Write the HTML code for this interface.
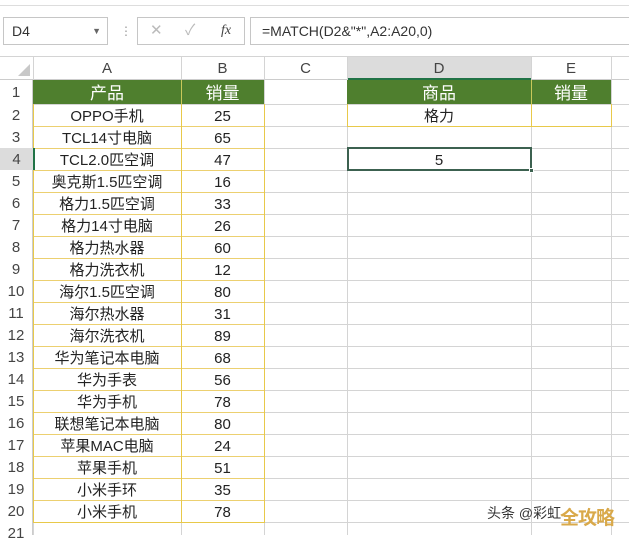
<!DOCTYPE html><html><head><meta charset="utf-8"><style>
body{margin:0;width:629px;height:535px;overflow:hidden;background:#fff;font-family:"Liberation Sans","Noto Sans CJK SC",sans-serif;position:relative}
.a{position:absolute;box-sizing:border-box}
.vl{position:absolute;top:57px;bottom:0;width:1px;background:#d4d4d4}
.hl{position:absolute;left:0;right:0;height:1px;background:#d4d4d4}
.rn{position:absolute;left:0;width:32px;text-align:center;font-size:15px;color:#444;height:22px;line-height:24px}
.c{position:absolute;text-align:center;font-size:15px;color:#222;height:22px;line-height:25px}
.ch{position:absolute;top:57px;height:23px;line-height:23px;text-align:center;font-size:15px;color:#444}
</style></head><body>
<div class="a" style="left:0;top:0;width:629px;height:6px;background:#fff;border-bottom:1px solid #ddd"></div>
<div class="a" style="left:3px;top:17px;width:105px;height:28px;border:1px solid #c6c6c6;font-size:14px;line-height:26px;padding-left:8px;color:#333">D4<span style="position:absolute;right:6px;font-size:9px;color:#666">▼</span></div>
<div class="a" style="left:120px;top:24px;color:#999;font-size:12px">⋮</div>
<div class="a" style="left:137px;top:17px;width:108px;height:28px;border:1px solid #c6c6c6;color:#bbb;font-size:15px;line-height:26px"><span style="position:absolute;left:12px">✕</span><span style="position:absolute;left:47px">✓</span><span style="position:absolute;left:83px;color:#444;font-style:italic;font-family:'Liberation Serif',serif;font-size:14px">fx</span></div>
<div class="a" style="left:250px;top:17px;width:385px;height:28px;border:1px solid #c6c6c6;font-size:14px;line-height:26px;padding-left:11px;color:#333">=MATCH(D2&amp;"*",A2:A20,0)</div>
<div class="a" style="left:0;top:56px;width:629px;height:1px;background:#d4d4d4"></div>
<div class="a" style="left:0;top:57px;width:629px;height:23px;background:#fff;border-bottom:1px solid #ccc"></div>
<div class="a" style="left:347px;top:57px;width:184px;height:23px;background:#dcdcdc;border-bottom:2px solid #217346"></div>
<div class="a" style="left:18px;top:64px;width:0;height:0;border-left:12px solid transparent;border-bottom:12px solid #c8c8c8"></div>
<div class="ch" style="left:33px;width:148px">A</div><div class="ch" style="left:181px;width:83px">B</div><div class="ch" style="left:264px;width:83px">C</div><div class="ch" style="left:347px;width:184px">D</div><div class="ch" style="left:531px;width:80px">E</div>
<div class="vl" style="left:33px"></div><div class="vl" style="left:181px"></div><div class="vl" style="left:264px"></div><div class="vl" style="left:347px"></div><div class="vl" style="left:531px"></div><div class="vl" style="left:611px"></div>
<div class="hl" style="top:104px"></div><div class="hl" style="top:126px"></div><div class="hl" style="top:148px"></div><div class="hl" style="top:170px"></div><div class="hl" style="top:192px"></div><div class="hl" style="top:214px"></div><div class="hl" style="top:236px"></div><div class="hl" style="top:258px"></div><div class="hl" style="top:280px"></div><div class="hl" style="top:302px"></div><div class="hl" style="top:324px"></div><div class="hl" style="top:346px"></div><div class="hl" style="top:368px"></div><div class="hl" style="top:390px"></div><div class="hl" style="top:412px"></div><div class="hl" style="top:434px"></div><div class="hl" style="top:456px"></div><div class="hl" style="top:478px"></div><div class="hl" style="top:500px"></div><div class="hl" style="top:522px"></div>
<div class="a" style="left:0;top:80px;width:33px;height:455px;background:#fff;border-right:1px solid #ccc"></div>
<div class="a" style="left:33px;top:80px;width:231px;height:24px;background:#4f7f2e"></div>
<div class="a" style="left:347px;top:80px;width:264px;height:24px;background:#4f7f2e"></div>
<div class="c" style="left:33px;top:81px;width:148px;color:#fff;font-size:17px">产品</div>
<div class="c" style="left:181px;top:81px;width:83px;color:#fff;font-size:17px">销量</div>
<div class="c" style="left:347px;top:81px;width:184px;color:#fff;font-size:17px">商品</div>
<div class="c" style="left:531px;top:81px;width:80px;color:#fff;font-size:17px">销量</div>
<div class="a" style="left:181px;top:80px;width:1px;height:24px;background:#c9c85a"></div>
<div class="a" style="left:531px;top:80px;width:1px;height:24px;background:#c9c85a"></div>
<div class="a" style="left:33px;top:104px;width:232px;height:419px;border:1px solid #e8c94a;border-top:0;background:repeating-linear-gradient(to bottom,transparent 0,transparent 22px,#ecd070 22px,#ecd070 23px);background-size:100% 22px;background-position:0 0"></div>
<div class="a" style="left:34px;top:126px;width:230px;height:396px;background:repeating-linear-gradient(to bottom,#ecd070 0,#ecd070 1px,transparent 1px,transparent 22px)"></div>
<div class="a" style="left:181px;top:104px;width:1px;height:419px;background:#e8c94a"></div>
<div class="a" style="left:347px;top:104px;width:265px;height:23px;border:1px solid #e8c94a;border-top:0"></div>
<div class="a" style="left:531px;top:104px;width:1px;height:22px;background:#e8c94a"></div>
<div class="c" style="left:347px;top:104px;width:184px">格力</div>
<div class="a" style="left:347px;top:147px;width:185px;height:24px;border:2px solid #3c6150"></div>
<div class="a" style="left:529px;top:168px;width:5px;height:5px;background:#3c6150;border:1px solid #fff"></div>
<div class="c" style="left:347px;top:148px;width:184px">5</div>
<div class="rn" style="top:81px">1</div>
<div class="rn" style="top:104px">2</div><div class="rn" style="top:126px">3</div><div class="rn" style="top:148px;background:#dcdcdc;border-right:2px solid #217346;width:33px">4</div><div class="rn" style="top:170px">5</div><div class="rn" style="top:192px">6</div><div class="rn" style="top:214px">7</div><div class="rn" style="top:236px">8</div><div class="rn" style="top:258px">9</div><div class="rn" style="top:280px">10</div><div class="rn" style="top:302px">11</div><div class="rn" style="top:324px">12</div><div class="rn" style="top:346px">13</div><div class="rn" style="top:368px">14</div><div class="rn" style="top:390px">15</div><div class="rn" style="top:412px">16</div><div class="rn" style="top:434px">17</div><div class="rn" style="top:456px">18</div><div class="rn" style="top:478px">19</div><div class="rn" style="top:500px">20</div><div class="rn" style="top:522px">21</div>
<div style="position:absolute;left:33px;top:104px;width:148px">
<div class="c" style="top:0;width:148px">OPPO手机</div><div class="c" style="top:22px;width:148px">TCL14寸电脑</div><div class="c" style="top:44px;width:148px">TCL2.0匹空调</div><div class="c" style="top:66px;width:148px">奥克斯1.5匹空调</div><div class="c" style="top:88px;width:148px">格力1.5匹空调</div><div class="c" style="top:110px;width:148px">格力14寸电脑</div><div class="c" style="top:132px;width:148px">格力热水器</div><div class="c" style="top:154px;width:148px">格力洗衣机</div><div class="c" style="top:176px;width:148px">海尔1.5匹空调</div><div class="c" style="top:198px;width:148px">海尔热水器</div><div class="c" style="top:220px;width:148px">海尔洗衣机</div><div class="c" style="top:242px;width:148px">华为笔记本电脑</div><div class="c" style="top:264px;width:148px">华为手表</div><div class="c" style="top:286px;width:148px">华为手机</div><div class="c" style="top:308px;width:148px">联想笔记本电脑</div><div class="c" style="top:330px;width:148px">苹果MAC电脑</div><div class="c" style="top:352px;width:148px">苹果手机</div><div class="c" style="top:374px;width:148px">小米手环</div><div class="c" style="top:396px;width:148px">小米手机</div>
</div>
<div style="position:absolute;left:181px;top:104px;width:83px">
<div class="c" style="top:0;width:83px">25</div><div class="c" style="top:22px;width:83px">65</div><div class="c" style="top:44px;width:83px">47</div><div class="c" style="top:66px;width:83px">16</div><div class="c" style="top:88px;width:83px">33</div><div class="c" style="top:110px;width:83px">26</div><div class="c" style="top:132px;width:83px">60</div><div class="c" style="top:154px;width:83px">12</div><div class="c" style="top:176px;width:83px">80</div><div class="c" style="top:198px;width:83px">31</div><div class="c" style="top:220px;width:83px">89</div><div class="c" style="top:242px;width:83px">68</div><div class="c" style="top:264px;width:83px">56</div><div class="c" style="top:286px;width:83px">78</div><div class="c" style="top:308px;width:83px">80</div><div class="c" style="top:330px;width:83px">24</div><div class="c" style="top:352px;width:83px">51</div><div class="c" style="top:374px;width:83px">35</div><div class="c" style="top:396px;width:83px">78</div>
</div>
<div class="a" style="left:487px;top:503px;font-size:14px;color:#333">头条 @彩虹</div>
<div class="a" style="left:560px;top:503px;font-size:19px;font-weight:bold;color:#d9a94a;letter-spacing:-1px">全攻略</div>
</body></html>
